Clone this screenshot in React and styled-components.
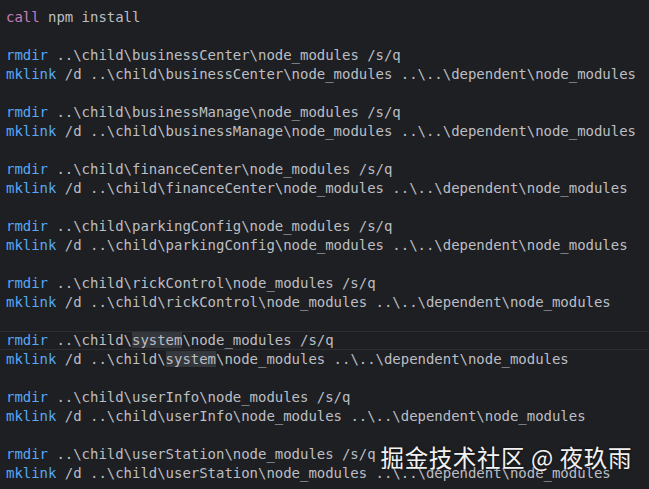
import React from 'react';
import styled, { createGlobalStyle } from 'styled-components';

const GlobalStyle = createGlobalStyle`
  html, body {
    margin: 0;
    padding: 0;
    background: #1e1f22;
  }
`;

const Editor = styled.div`
  position: relative;
  width: 649px;
  height: 489px;
  overflow: hidden;
  box-sizing: border-box;
  padding-top: 8px;
  background: #1e1f22;
  font-family: "DejaVu Sans Mono", "Liberation Mono", monospace;
  font-size: 14px;
  letter-spacing: -0.03px;
  color: #bcbec4;
`;

const Line = styled.div`
  height: 19px;
  line-height: 19px;
  padding-left: 6px;
  white-space: pre;
  box-sizing: border-box;
  ${({ current }) =>
    current &&
    `
    border-top: 1px solid #2c2d30;
    border-bottom: 1px solid #2c2d30;
    line-height: 17px;
  `}
`;

const Keyword = styled.span`
  color: ${({ kind }) => (kind === 'call' ? '#c77dbb' : '#56a8f5')};
`;

const Match = styled.span`
  background: #34373c;
`;

const Watermark = styled.div`
  position: absolute;
  right: 17px;
  bottom: 15px;
  font-family: "Noto Sans CJK SC", "Noto Sans", sans-serif;
  font-size: 23.5px;
  color: #f2f2f2;
  letter-spacing: 0.6px;
  text-shadow: 0 0 3px rgba(0, 0, 0, 0.6);
`;

const modules = [
  'businessCenter',
  'businessManage',
  'financeCenter',
  'parkingConfig',
  'rickControl',
  'system',
  'userInfo',
  'userStation',
];

function Name({ name }) {
  return name === 'system' ? <Match>{name}</Match> : name;
}

export default function App() {
  return (
    <>
      <GlobalStyle />
      <Editor>
        <Line>
          <Keyword kind="call">call</Keyword> npm install
        </Line>
        {modules.map((name) => (
          <React.Fragment key={name}>
            <Line />
            <Line current={name === 'system'}>
              <Keyword>rmdir</Keyword> ..\child\<Name name={name} />\node_modules /s/q
            </Line>
            <Line>
              <Keyword>mklink</Keyword> /d ..\child\<Name name={name} />\node_modules ..\..\dependent\node_modules
            </Line>
          </React.Fragment>
        ))}
        <Watermark>掘金技术社区 @ 夜玖雨</Watermark>
      </Editor>
    </>
  );
}
